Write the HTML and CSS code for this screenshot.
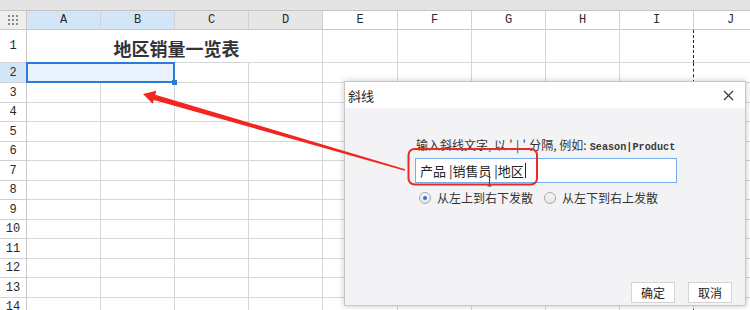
FILE: index.html
```html
<!DOCTYPE html>
<html lang="zh">
<head>
<meta charset="utf-8">
<title>斜线</title>
<link rel="stylesheet" href="styles.css">
</head>
<body>
<div class="app">
  <div class="topbar"></div>
  <div class="sheet">
    <div class="corner"><svg width="10" height="10" viewBox="0 0 10 10"><g fill="#8a8a8a"><rect x="0" y="0" width="2" height="2"/><rect x="4" y="0" width="2" height="2"/><rect x="8" y="0" width="2" height="2"/><rect x="0" y="4" width="2" height="2"/><rect x="4" y="4" width="2" height="2"/><rect x="8" y="4" width="2" height="2"/><rect x="0" y="8" width="2" height="2"/><rect x="4" y="8" width="2" height="2"/><rect x="8" y="8" width="2" height="2"/></g></svg></div>
    <div class="ch sel">A</div><div class="ch sel">B</div><div class="ch gray">C</div><div class="ch gray">D</div><div class="ch">E</div><div class="ch">F</div><div class="ch">G</div><div class="ch">H</div><div class="ch">I</div><div class="ch">J</div>

    <div class="rh">1</div><div class="c title span4">地区销量一览表</div><div class="c"></div><div class="c"></div><div class="c"></div><div class="c"></div><div class="c pb"></div><div class="c"></div>
    <div class="rh sel">2</div><div class="c selbox span2"></div><div class="c"></div><div class="c"></div><div class="c"></div><div class="c"></div><div class="c"></div><div class="c"></div><div class="c pb"></div><div class="c"></div>
    <div class="rh">3</div><div class="c"></div><div class="c"></div><div class="c"></div><div class="c"></div><div class="c"></div><div class="c"></div><div class="c"></div><div class="c"></div><div class="c pb"></div><div class="c"></div>
    <div class="rh">4</div><div class="c"></div><div class="c"></div><div class="c"></div><div class="c"></div><div class="c"></div><div class="c"></div><div class="c"></div><div class="c"></div><div class="c pb"></div><div class="c"></div>
    <div class="rh">5</div><div class="c"></div><div class="c"></div><div class="c"></div><div class="c"></div><div class="c"></div><div class="c"></div><div class="c"></div><div class="c"></div><div class="c pb"></div><div class="c"></div>
    <div class="rh">6</div><div class="c"></div><div class="c"></div><div class="c"></div><div class="c"></div><div class="c"></div><div class="c"></div><div class="c"></div><div class="c"></div><div class="c pb"></div><div class="c"></div>
    <div class="rh">7</div><div class="c"></div><div class="c"></div><div class="c"></div><div class="c"></div><div class="c"></div><div class="c"></div><div class="c"></div><div class="c"></div><div class="c pb"></div><div class="c"></div>
    <div class="rh">8</div><div class="c"></div><div class="c"></div><div class="c"></div><div class="c"></div><div class="c"></div><div class="c"></div><div class="c"></div><div class="c"></div><div class="c pb"></div><div class="c"></div>
    <div class="rh">9</div><div class="c"></div><div class="c"></div><div class="c"></div><div class="c"></div><div class="c"></div><div class="c"></div><div class="c"></div><div class="c"></div><div class="c pb"></div><div class="c"></div>
    <div class="rh">10</div><div class="c"></div><div class="c"></div><div class="c"></div><div class="c"></div><div class="c"></div><div class="c"></div><div class="c"></div><div class="c"></div><div class="c pb"></div><div class="c"></div>
    <div class="rh">11</div><div class="c"></div><div class="c"></div><div class="c"></div><div class="c"></div><div class="c"></div><div class="c"></div><div class="c"></div><div class="c"></div><div class="c pb"></div><div class="c"></div>
    <div class="rh">12</div><div class="c"></div><div class="c"></div><div class="c"></div><div class="c"></div><div class="c"></div><div class="c"></div><div class="c"></div><div class="c"></div><div class="c pb"></div><div class="c"></div>
    <div class="rh">13</div><div class="c"></div><div class="c"></div><div class="c"></div><div class="c"></div><div class="c"></div><div class="c"></div><div class="c"></div><div class="c"></div><div class="c pb"></div><div class="c"></div>
    <div class="rh">14</div><div class="c"></div><div class="c"></div><div class="c"></div><div class="c"></div><div class="c"></div><div class="c"></div><div class="c"></div><div class="c"></div><div class="c pb"></div><div class="c"></div>
  </div>

  <div class="dialog">
    <div class="dlg-title">
      <span class="dlg-name">斜线</span>
      <svg class="dlg-close" width="11" height="11" viewBox="0 0 11 11"><path d="M1 1 L10 10 M10 1 L1 10" stroke="#333" stroke-width="1.1" fill="none"/></svg>
    </div>
    <div class="dlg-body">
      <div class="dlg-label">输入斜线文字, 以<span class="q">'</span>|<span class="q">'</span>分隔, 例如:<span class="mono">Season|Product</span></div>
      <div class="dlg-input"><span>产品 |销售员 |地区</span><span class="caret"></span></div>
      <div class="radios">
        <label class="radio"><span class="dot on"></span>从左上到右下发散</label>
        <label class="radio"><span class="dot"></span>从左下到右上发散</label>
      </div>
      <div class="buttons">
        <div class="btn">确定</div>
        <div class="btn">取消</div>
      </div>
    </div>
  </div>

  <svg class="annot" width="750" height="310" viewBox="0 0 750 310">
    <polygon fill="#f2251f" points="143,94 156.3,90.8 155.3,94.7 405.2,169.2 404.8,170.8 153.8,99.9 152.7,103.8"/>
    <rect x="408.5" y="149" width="128.5" height="35.5" rx="6" ry="6" fill="none" stroke="#ea2a26" stroke-width="2"/>
    <path d="M489.5 173.5 V186 M487.5 186 H491.5" stroke="#444" stroke-width="1" fill="none"/>
  </svg>
</div>
</body>
</html>
```
FILE: styles.css
```css
* { box-sizing: border-box; }
html, body { margin: 0; padding: 0; }
body {
  width: 750px;
  height: 310px;
  overflow: hidden;
  background: #ffffff;
  font-family: "Noto Sans CJK SC", "Noto Sans", sans-serif;
}
.app {
  position: relative;
  width: 750px;
  height: 310px;
  overflow: hidden;
}
.topbar {
  height: 11px;
  background: #e4e4e4;
  border-bottom: 1px solid #c4c4c4;
}
.sheet {
  display: grid;
  grid-template-columns: 27px 74px 74px 74px 74px 75px 74px 74px 74px 74px 74px;
  grid-template-rows: 19px 33px 20px 20px 19px 20px 19px 20px 19px 20px 19px 20px 19px 20px 19px;
  width: 768px;
}
.corner {
  display: flex;
  align-items: center;
  justify-content: center;
  background: #eeeeee;
  border-right: 1px solid #c8c8c8;
  border-bottom: 1px solid #c8c8c8;
}
.ch {
  display: flex;
  align-items: center;
  justify-content: center;
  font-family: "Liberation Mono", monospace;
  font-size: 12px;
  color: #2a2a2a;
  background: #ffffff;
  border-right: 1px solid #d2d2d2;
  border-bottom: 1px solid #c8c8c8;
}
.ch.sel { background: #d2e6f7; }
.ch.gray { background: #e6e6e6; }
.rh {
  display: flex;
  align-items: center;
  justify-content: center;
  font-family: "Liberation Mono", monospace;
  font-size: 12px;
  color: #2a2a2a;
  background: #ffffff;
  border-right: 1px solid #c8c8c8;
  border-bottom: 1px solid #d2d2d2;
}
.rh.sel { background: #d2e6f7; }
.c {
  border-right: 1px solid #d6d6d6;
  border-bottom: 1px solid #d6d6d6;
}
.c.pb { border-right: 1px dashed #222222; }
.span4 { grid-column: span 4; }
.span2 { grid-column: span 2; }
.title {
  display: flex;
  align-items: center;
  justify-content: center;
  font-size: 18px;
  font-weight: bold;
  color: #333333;
  padding-left: 4px;
  padding-top: 3px;
}
.selbox {
  position: relative;
  background: #e9f2fc;
}
.selbox::after {
  content: "";
  position: absolute;
  left: -1px;
  top: -1px;
  right: -1px;
  bottom: -1px;
  border: 2px solid #2b7bd8;
}
.selbox::before {
  content: "";
  position: absolute;
  right: -3px;
  bottom: -3px;
  width: 5px;
  height: 5px;
  background: #2b7bd8;
  z-index: 2;
}

.dialog {
  position: absolute;
  left: 344px;
  top: 81px;
  width: 402px;
  height: 225px;
  display: flex;
  flex-direction: column;
  border: 1px solid #c6c6c6;
  box-shadow: 0 0 6px rgba(0, 0, 0, 0.22);
  background: #f3f3f5;
  z-index: 5;
}
.dlg-title {
  height: 26px;
  display: flex;
  align-items: center;
  justify-content: space-between;
  padding: 0 11px 0 3px;
  background: #ffffff;
}
.dlg-name {
  font-size: 13px;
  color: #222222;
}
.dlg-body {
  flex: 1;
  display: flex;
  flex-direction: column;
  padding: 29px 13px 2px 71px;
}
.dlg-label {
  font-size: 12px;
  line-height: 16px;
  color: #333333;
  white-space: nowrap;
}
.q {
  display: inline-block;
  width: 10px;
  text-align: center;
}
.mono {
  font-family: "Liberation Mono", monospace;
  font-size: 10.2px;
  font-weight: bold;
  color: #3a3a3a;
  margin-left: 3px;
}
.dlg-input {
  margin-top: 2px;
  margin-left: -1px;
  width: 262px;
  height: 25px;
  display: flex;
  align-items: center;
  padding-left: 4px;
  background: #ffffff;
  border: 1px solid #76adea;
  font-size: 13px;
  color: #222222;
}
.caret {
  display: inline-block;
  width: 1px;
  height: 15px;
  margin-left: 1px;
  background: #222222;
}
.radios {
  display: flex;
  gap: 11px;
  margin-top: 7px;
  margin-left: 3px;
}
.radio {
  display: flex;
  align-items: center;
  gap: 6px;
  font-size: 12px;
  line-height: 16px;
  color: #333333;
}
.dot {
  position: relative;
  width: 12px;
  height: 12px;
  border-radius: 50%;
  border: 1px solid #a9a9a9;
  background: linear-gradient(#f7f7f7, #e6e6e6);
}
.dot.on::after {
  content: "";
  position: absolute;
  left: 3px;
  top: 3px;
  width: 4px;
  height: 4px;
  border-radius: 50%;
  background: #2a7ad8;
}
.buttons {
  margin-top: auto;
  display: flex;
  justify-content: flex-end;
  gap: 13px;
}
.btn {
  width: 44px;
  height: 21px;
  display: flex;
  align-items: center;
  justify-content: center;
  font-size: 12px;
  color: #222222;
  background: #ffffff;
  border: 1px solid #d4d4d4;
}
.annot {
  position: absolute;
  left: 0;
  top: 0;
  z-index: 10;
  pointer-events: none;
}
```
